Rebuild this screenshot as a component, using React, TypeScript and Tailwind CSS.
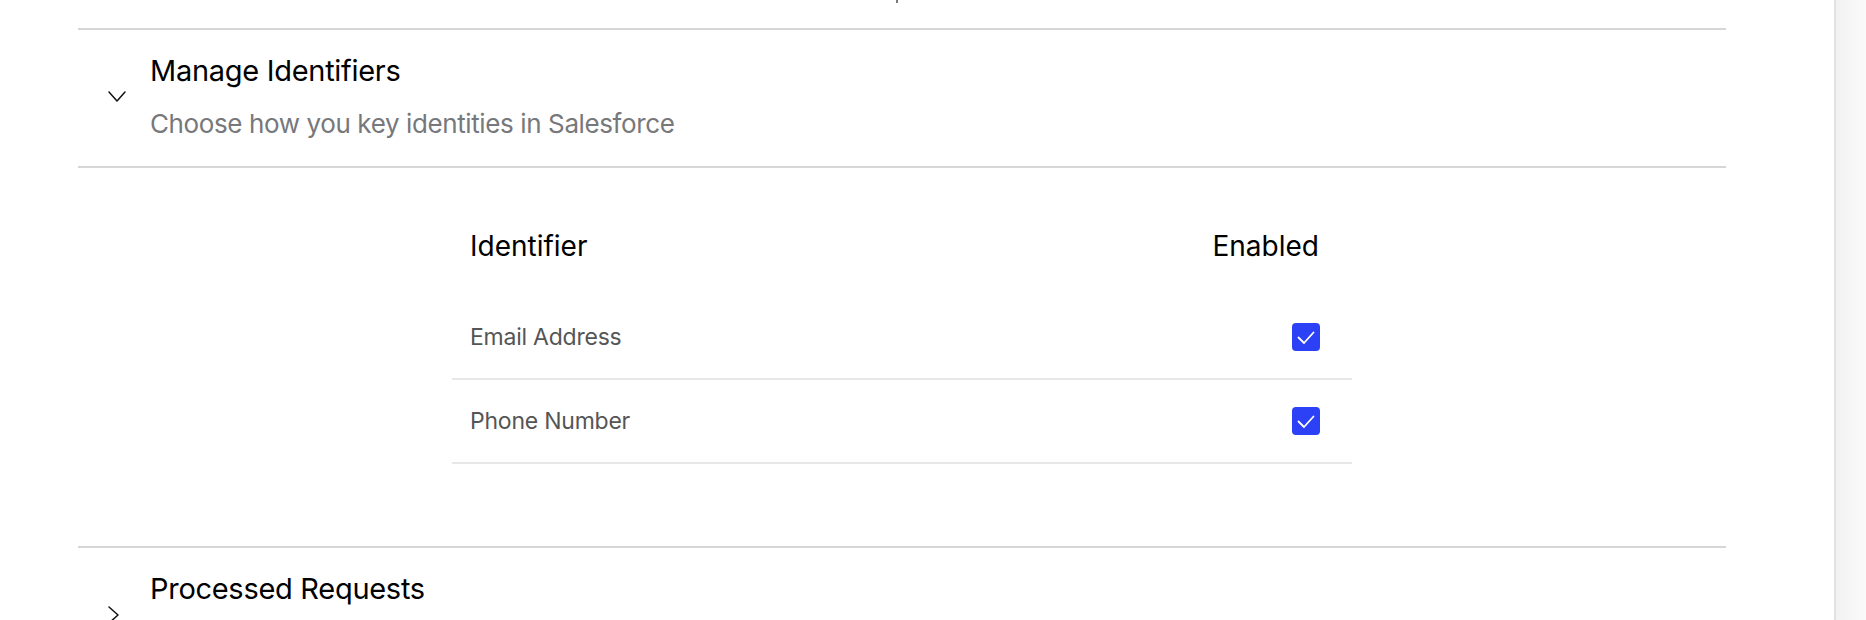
import React from "react";

function ChevronDown() {
  return (
    <svg width="18" height="11" viewBox="0 0 18 11" fill="none">
      <polyline points="1,1 9,10 17,1" stroke="#111" strokeWidth="1.5" strokeLinecap="round" strokeLinejoin="round" />
    </svg>
  );
}

function ChevronRight() {
  return (
    <svg width="11" height="18" viewBox="0 0 11 18" fill="none">
      <polyline points="1,1 10,9 1,17" stroke="#111" strokeWidth="1.5" strokeLinecap="round" strokeLinejoin="round" />
    </svg>
  );
}

function Checkbox() {
  return (
    <div className="flex h-[28px] w-[28px] items-center justify-center rounded-[4px] bg-[#2c40f6]">
      <svg width="28" height="28" viewBox="0 0 28 28" fill="none">
        <polyline points="6.5,14.5 12,20 21.5,9.5" stroke="#fff" strokeWidth="1.8" strokeLinecap="round" strokeLinejoin="round" />
      </svg>
    </div>
  );
}

function SectionHeader({ title, subtitle, open }: { title: string; subtitle?: string; open: boolean }) {
  return (
    <div className="flex items-center pt-[23px] pb-[26px]">
      <div className="flex w-[72px] shrink-0 items-center pl-[30px]">
        {open ? <ChevronDown /> : <ChevronRight />}
      </div>
      <div className="flex flex-col">
        <div className="text-[29px] leading-[36px] tracking-[-0.01em] text-black">{title}</div>
        {subtitle ? (
          <div className="mt-[19px] text-[26px] leading-[32px] tracking-[-0.015em] text-[#77787b]">{subtitle}</div>
        ) : (
          <div className="mt-[19px] h-[32px]" />
        )}
      </div>
    </div>
  );
}

const rows = ["Email Address", "Phone Number"];

export default function App() {
  return (
    <div className="flex h-[620px] w-full overflow-hidden bg-white font-['Inter',sans-serif]">
      <div className="flex-1 pl-[78px] pr-[108px]">
        <div className="h-[28px]">
          <div className="ml-[818px] h-[3px] w-[2px] bg-[#7a7a7a]" />
        </div>
        <div className="border-y-2 border-[#d6d6d6]">
          <SectionHeader
            title="Manage Identifiers"
            subtitle="Choose how you key identities in Salesforce"
            open
          />
        </div>
        <div className="pt-[61px] pb-[82px]">
          <div className="mx-auto w-[900px]">
            <div className="flex h-[34px] items-center justify-between pl-[18px] pr-[33px] text-[28px] leading-[34px] text-black">
              <span>Identifier</span>
              <span>Enabled</span>
            </div>
            <div className="mt-[33px]">
              {rows.map((r) => (
                <div
                  key={r}
                  className="flex h-[84px] items-center justify-between border-b-2 border-[#e7e7e7] pl-[18px] pr-[32px]"
                >
                  <span className="text-[23px] leading-[28px] tracking-[-0.01em] text-[#555555]">{r}</span>
                  <Checkbox />
                </div>
              ))}
            </div>
          </div>
        </div>
        <div className="border-t-2 border-[#d6d6d6]">
          <SectionHeader title="Processed Requests" open={false} />
        </div>
      </div>
      <div className="w-[32px] shrink-0 border-l-2 border-[#e2e2e2] bg-gradient-to-r from-[#f2f2f2] to-[#fafafa]" />
    </div>
  );
}
